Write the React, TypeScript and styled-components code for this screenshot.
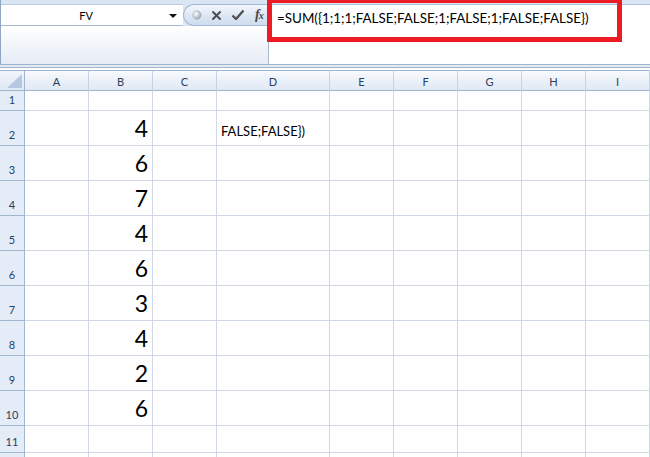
import styled, { createGlobalStyle } from 'styled-components';

const GlobalStyle = createGlobalStyle`
  html, body {
    margin: 0;
    padding: 0;
    background: #ffffff;
    overflow: hidden;
  }
  body {
    font-family: Lato, "Noto Sans", sans-serif;
  }
`;

const Window = styled.div`
  position: relative;
  width: 650px;
  height: 457px;
  overflow: hidden;
  background: #ffffff;
`;

// Formula bar
const FormulaBar = styled.div`
  display: flex;
  height: 65px;
  padding-top: 4px;
  box-sizing: border-box;
  background: linear-gradient(#d9e5f4, #e3ebf6);
  border-left: 1px solid #8ea6c4;
  border-bottom: 1px solid #9fb3cc;
`;

const NamePanel = styled.div`
  width: 267px;
  display: flex;
  flex-direction: column;
`;

const NameRow = styled.div`
  display: flex;
  height: 22px;
`;

const NameBox = styled.div`
  width: 182px;
  display: flex;
  align-items: center;
  background: #ffffff;
  border-top: 1px solid #b9cadf;
  border-bottom: 1px solid #a7b9d0;
  box-sizing: border-box;

  .name {
    flex: 1;
    text-align: center;
    font-size: 11px;
    color: #000;
    padding-left: 2px;
  }
`;

const DropArrow = styled.div`
  width: 0;
  height: 0;
  margin: 1px 6px 0 0;
  border-left: 4px solid transparent;
  border-right: 4px solid transparent;
  border-top: 4px solid #111;
`;

const ButtonPill = styled.div`
  flex: 1;
  display: flex;
  align-items: center;
  padding-left: 8px;
  gap: 9px;
  border: 1px solid #a3b8d3;
  border-right: none;
  border-radius: 11px 0 0 11px;
  background: linear-gradient(#f4f7fc, #dbe6f4 55%, #cfddef);
  box-sizing: border-box;
`;

const Fx = styled.span`
  font-family: "Liberation Serif", "DejaVu Serif", serif;
  font-style: italic;
  font-weight: bold;
  font-size: 14px;
  color: #4a4a4a;
  letter-spacing: -1px;
  margin-left: 1px;

  small {
    font-size: 10px;
  }
`;

const NameExtra = styled.div`
  flex: 1;
  background: linear-gradient(#ffffff, #f4f7fb 40%, #e6ecf5);
`;

const FormulaInput = styled.div`
  flex: 1;
  background: #ffffff;
  border-top: 1px solid #b0c2d9;
  border-left: 1px solid #a6b9d1;
  padding: 5px 0 0 8px;
  font-size: 13.4px;
  color: #000;
  white-space: nowrap;
`;

const Highlight = styled.div`
  position: absolute;
  left: 267px;
  top: -2px;
  width: 355px;
  height: 44px;
  box-sizing: border-box;
  border: 5px solid #ed1c24;
`;

const Divider = styled.div`
  height: 3px;
  background: #e2eaf5;
  border-bottom: 1px solid #9fb3cc;
  box-sizing: border-box;
  margin-bottom: 2px;
`;

// Sheet grid
const Sheet = styled.div`
  display: grid;
  grid-template-columns: 25px 64px 64px 64px 113px repeat(5, 64px);
  grid-template-rows: 21px 20px repeat(9, 35px) 27px 20px;
`;

const Corner = styled.div`
  position: relative;
  background: linear-gradient(#f1f5fb, #dfe8f4);
  border-top: 1px solid #9eb6ce;
  border-bottom: 1px solid #9eb6ce;
  border-right: 1px solid #9eb6ce;
  box-sizing: border-box;

  &::after {
    content: '';
    position: absolute;
    right: 2px;
    bottom: 2px;
    width: 0;
    height: 0;
    border-left: 15px solid transparent;
    border-bottom: 14px solid #b5c8e0;
  }
`;

const ColHead = styled.div`
  display: flex;
  align-items: center;
  justify-content: center;
  padding-top: 1px;
  background: linear-gradient(#f8fafd, #e9eff8 60%, #e1e9f5);
  border-top: 1px solid #9eb6ce;
  border-bottom: 1px solid #9eb6ce;
  border-right: 1px solid #c5d3e3;
  box-sizing: border-box;
  font-size: 11px;
  color: #27415f;
`;

const RowHead = styled.div`
  display: flex;
  align-items: flex-end;
  justify-content: center;
  padding-bottom: 4px;
  background: #e4ecf7;
  border-right: 1px solid #9eb6ce;
  border-bottom: 1px solid #9eb6ce;
  box-sizing: border-box;
  font-size: 11px;
  color: #27415f;
`;

const Cell = styled.div<{ $align?: 'left' | 'right'; $big?: boolean }>`
  display: flex;
  align-items: flex-end;
  justify-content: ${({ $align }) => ($align === 'right' ? 'flex-end' : 'flex-start')};
  padding: ${({ $big }) => ($big ? '0 4px 2px 4px' : '0 4px 5px 4px')};
  border-right: 1px solid #d0d7e5;
  border-bottom: 1px solid #d0d7e5;
  box-sizing: border-box;
  font-size: ${({ $big }) => ($big ? '23px' : '13px')};
  line-height: 1.2;
  color: #000;
  white-space: nowrap;
  overflow: visible;
`;

const columns = ['A', 'B', 'C', 'D', 'E', 'F', 'G', 'H', 'I'];
const values: Record<number, string> = {
  2: '4',
  3: '6',
  4: '7',
  5: '4',
  6: '6',
  7: '3',
  8: '4',
  9: '2',
  10: '6',
};

const ToolIcons = () => (
  <>
    <svg width="10" height="10" viewBox="0 0 10 10">
      <defs>
        <radialGradient id="dot" cx="35%" cy="35%" r="70%">
          <stop offset="0%" stopColor="#ffffff" />
          <stop offset="100%" stopColor="#9aa4b0" />
        </radialGradient>
      </defs>
      <circle cx="5" cy="5" r="4.2" fill="url(#dot)" stroke="#a7b0bb" strokeWidth="0.6" />
    </svg>
    <svg width="11" height="11" viewBox="0 0 11 11">
      <path d="M2 2 L9 9 M9 2 L2 9" stroke="#4d4d4d" strokeWidth="2" strokeLinecap="round" fill="none" />
    </svg>
    <svg width="14" height="12" viewBox="0 0 14 12">
      <path d="M1.5 6.5 L5 10 L12.5 1.5" stroke="#4d4d4d" strokeWidth="2.2" strokeLinejoin="round" fill="none" />
    </svg>
    <Fx>
      f<small>x</small>
    </Fx>
  </>
);

const App = () => {
  const rows = Array.from({ length: 11 }, (_, i) => i + 1);

  return (
    <Window>
      <GlobalStyle />
      <FormulaBar>
        <NamePanel>
          <NameRow>
            <NameBox>
              <span className="name">FV</span>
              <DropArrow />
            </NameBox>
            <ButtonPill>
              <ToolIcons />
            </ButtonPill>
          </NameRow>
          <NameExtra />
        </NamePanel>
        <FormulaInput>=SUM({'{'}1;1;1;FALSE;FALSE;1;FALSE;1;FALSE;FALSE{'}'})</FormulaInput>
      </FormulaBar>
      <Divider />
      <Sheet>
        <Corner />
        {columns.map((c) => (
          <ColHead key={c}>{c}</ColHead>
        ))}
        {rows.map((r) => (
          <Row key={r} index={r} />
        ))}
        {/* row 12 is only partly in view; its label sits below the window edge */}
        <Row index={12} hideLabel />
      </Sheet>
      <Highlight />
    </Window>
  );
};

const Row = ({ index, hideLabel }: { index: number; hideLabel?: boolean }) => (
  <>
    <RowHead>{hideLabel ? null : index}</RowHead>
    {columns.map((c) => {
      if (c === 'B' && values[index]) {
        return (
          <Cell key={c} $align="right" $big>
            {values[index]}
          </Cell>
        );
      }
      if (c === 'D' && index === 2) {
        return <Cell key={c}>FALSE;FALSE{'}'})</Cell>;
      }
      return <Cell key={c} />;
    })}
  </>
);

export default App;
